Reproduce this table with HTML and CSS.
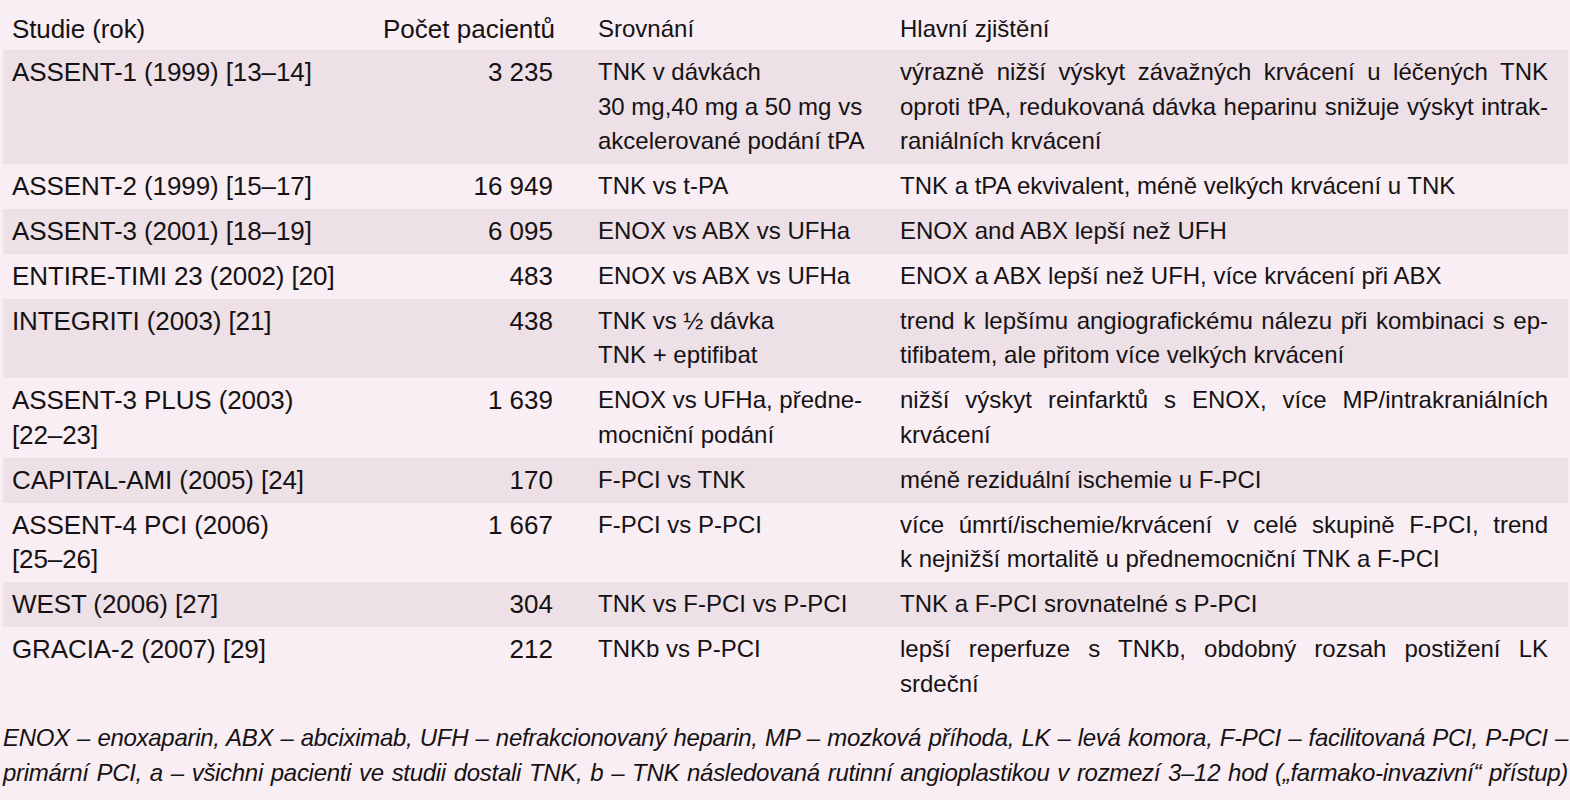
FILE: index.html
```html
<!DOCTYPE html>
<html lang="cs">
<head>
<meta charset="utf-8">
<title>Studie TNK</title>
<link rel="stylesheet" href="styles.css">
</head>
<body>
<table class="studies">
  <colgroup>
    <col class="c-study">
    <col class="c-count">
    <col class="c-cmp">
    <col class="c-find">
  </colgroup>
  <thead>
    <tr>
      <th class="study">Studie (rok)</th>
      <th class="count">Počet pacientů</th>
      <th class="cmp">Srovnání</th>
      <th class="find">Hlavní zjištění</th>
    </tr>
  </thead>
  <tbody>
    <tr class="dark">
      <td class="study">ASSENT-1 (1999) [13–14]</td>
      <td class="count">3 235</td>
      <td class="cmp"><span class="ln">TNK v dávkách</span><span class="ln">30 mg,40 mg a 50 mg vs</span><span class="ln">akcelerované podání tPA</span></td>
      <td class="find"><span class="ln j">výrazně nižší výskyt závažných krvácení u léčených TNK</span><span class="ln j">oproti tPA, redukovaná dávka heparinu snižuje výskyt intrak-</span><span class="ln">raniálních krvácení</span></td>
    </tr>
    <tr>
      <td class="study">ASSENT-2 (1999) [15–17]</td>
      <td class="count">16 949</td>
      <td class="cmp">TNK vs t-PA</td>
      <td class="find">TNK a tPA ekvivalent, méně velkých krvácení u TNK</td>
    </tr>
    <tr class="dark">
      <td class="study">ASSENT-3 (2001) [18–19]</td>
      <td class="count">6 095</td>
      <td class="cmp">ENOX vs ABX vs UFHa</td>
      <td class="find">ENOX and ABX lepší než UFH</td>
    </tr>
    <tr>
      <td class="study">ENTIRE-TIMI 23 (2002) [20]</td>
      <td class="count">483</td>
      <td class="cmp">ENOX vs ABX vs UFHa</td>
      <td class="find">ENOX a ABX lepší než UFH, více krvácení při ABX</td>
    </tr>
    <tr class="dark">
      <td class="study">INTEGRITI (2003) [21]</td>
      <td class="count">438</td>
      <td class="cmp"><span class="ln">TNK vs ½ dávka</span><span class="ln">TNK + eptifibat</span></td>
      <td class="find"><span class="ln j">trend k lepšímu angiografickému nálezu při kombinaci s ep-</span><span class="ln">tifibatem, ale přitom více velkých krvácení</span></td>
    </tr>
    <tr>
      <td class="study"><span class="ln">ASSENT-3 PLUS (2003)</span><span class="ln">[22–23]</span></td>
      <td class="count">1 639</td>
      <td class="cmp"><span class="ln">ENOX vs UFHa, předne-</span><span class="ln">mocniční podání</span></td>
      <td class="find"><span class="ln j">nižší výskyt reinfarktů s ENOX, více MP/intrakraniálních</span><span class="ln">krvácení</span></td>
    </tr>
    <tr class="dark">
      <td class="study">CAPITAL-AMI (2005) [24]</td>
      <td class="count">170</td>
      <td class="cmp">F-PCI vs TNK</td>
      <td class="find">méně reziduální ischemie u F-PCI</td>
    </tr>
    <tr>
      <td class="study"><span class="ln">ASSENT-4 PCI (2006)</span><span class="ln">[25–26]</span></td>
      <td class="count">1 667</td>
      <td class="cmp">F-PCI vs P-PCI</td>
      <td class="find"><span class="ln j">více úmrtí/ischemie/krvácení v celé skupině F-PCI, trend</span><span class="ln">k nejnižší mortalitě u přednemocniční TNK a F-PCI</span></td>
    </tr>
    <tr class="dark">
      <td class="study">WEST (2006) [27]</td>
      <td class="count">304</td>
      <td class="cmp">TNK vs F-PCI vs P-PCI</td>
      <td class="find">TNK a F-PCI srovnatelné s P-PCI</td>
    </tr>
    <tr>
      <td class="study">GRACIA-2 (2007) [29]</td>
      <td class="count">212</td>
      <td class="cmp">TNKb vs P-PCI</td>
      <td class="find"><span class="ln j">lepší reperfuze s TNKb, obdobný rozsah postižení LK</span><span class="ln">srdeční</span></td>
    </tr>
  </tbody>
</table>
<p class="note"><span class="ln j">ENOX – enoxaparin, ABX – abciximab, UFH – nefrakcionovaný heparin, MP – mozková příhoda, LK – levá komora, F-PCI – facilitovaná PCI, P-PCI –</span><span class="ln j">primární PCI, a – všichni pacienti ve studii dostali TNK, b – TNK následovaná rutinní angioplastikou v rozmezí 3–12 hod („farmako-invazivní“ přístup)</span></p>
</body>
</html>
```
FILE: styles.css
```css
html, body {
  margin: 0;
  padding: 0;
  background: #f8eef3;
}
body {
  padding: 0 2px 0 3px;
  font-family: "Liberation Sans", Arial, sans-serif;
  font-size: 24px;
  color: #161214;
  overflow: hidden;
}
.studies {
  width: 1565px;
  border-collapse: collapse;
  table-layout: fixed;
}
.c-study { width: 380px; }
.c-count { width: 182px; }
.c-cmp { width: 323px; }
.c-find { width: 680px; }
.studies th,
.studies td {
  font-weight: normal;
  line-height: 34.8px;
  padding: 5px 0;
  vertical-align: top;
  text-align: left;
  white-space: nowrap;
}
.studies th {
  padding-top: 12px;
  padding-bottom: 3px;
}
.studies tr.dark td {
  background: #ede0e6;
}
.studies .study {
  padding-left: 9px;
  font-size: 26px;
  letter-spacing: -0.1px;
}
.studies .count {
  text-align: right;
  padding-right: 12px;
  font-size: 26px;
}
.studies .cmp { padding-left: 33px; }
.studies .find { padding-left: 12px; padding-right: 20px; }
.ln {
  display: block;
}
.j {
  text-align: justify;
  text-align-last: justify;
}
.note {
  margin: 13px 0 0 0;
  font-style: italic;
  line-height: 35px;
  letter-spacing: -0.3px;
  white-space: nowrap;
}
```
